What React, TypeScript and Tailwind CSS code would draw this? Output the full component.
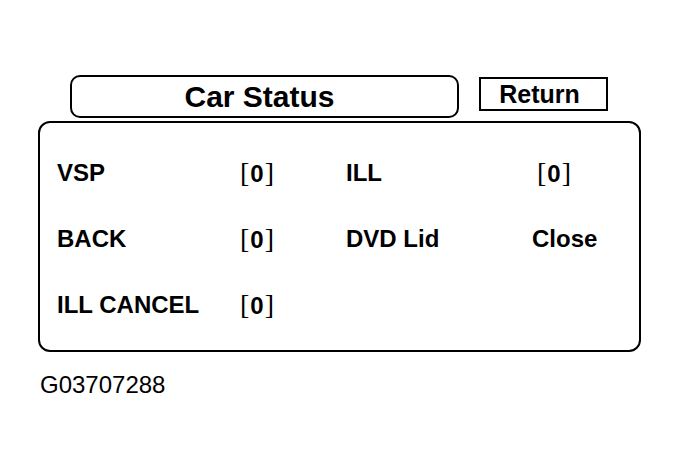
import React from 'react';

const rows = [
  { label: 'VSP', value: '0', label2: 'ILL', value2: '0' },
  { label: 'BACK', value: '0', label2: 'DVD Lid', text2: 'Close' },
  { label: 'ILL CANCEL', value: '0' },
];

const Bracketed: React.FC<{ value: string }> = ({ value }) => (
  <span className="inline-flex items-baseline">
    <span className="font-normal text-[28px] font-['Liberation_Serif',serif]">[</span>
    <span className="font-bold mx-[1px]">{value}</span>
    <span className="font-normal text-[28px] font-['Liberation_Serif',serif]">]</span>
  </span>
);

export default function App() {
  return (
    <div className="w-[679px] h-[472px] bg-white text-black font-['Liberation_Sans',Arial,sans-serif] overflow-hidden">
      <div className="flex items-start pt-[75px] pl-[70px]">
        <div className="w-[389px] h-[43px] border-2 border-black rounded-[10px] flex items-center justify-center">
          <span className="text-[30px] leading-none font-bold pr-[10px]">Car Status</span>
        </div>
        <div className="ml-[20px] mt-[2px] w-[129px] h-[34px] border-2 border-black flex items-center justify-center">
          <span className="text-[25px] leading-none font-bold pr-[8px]">Return</span>
        </div>
      </div>

      <div className="ml-[38px] mt-[3px] w-[603px] h-[231px] border-2 border-black rounded-[12px] pl-[17px] pt-[38px]">
        <div className="grid grid-cols-[183px_106px_186px_1fr] gap-y-[41px] text-[24px] leading-[24px] font-bold">
          {rows.map((r) => (
            <React.Fragment key={r.label}>
              <div>{r.label}</div>
              <div>
                <Bracketed value={r.value} />
              </div>
              <div>{r.label2 ?? ''}</div>
              <div>
                {r.value2 && (
                  <span className="ml-[5px]">
                    <Bracketed value={r.value2} />
                  </span>
                )}
                {r.text2}
              </div>
            </React.Fragment>
          ))}
        </div>
      </div>

      <div className="pl-[40px] pt-[21px] text-[24px] leading-[24px]">G03707288</div>
    </div>
  );
}
